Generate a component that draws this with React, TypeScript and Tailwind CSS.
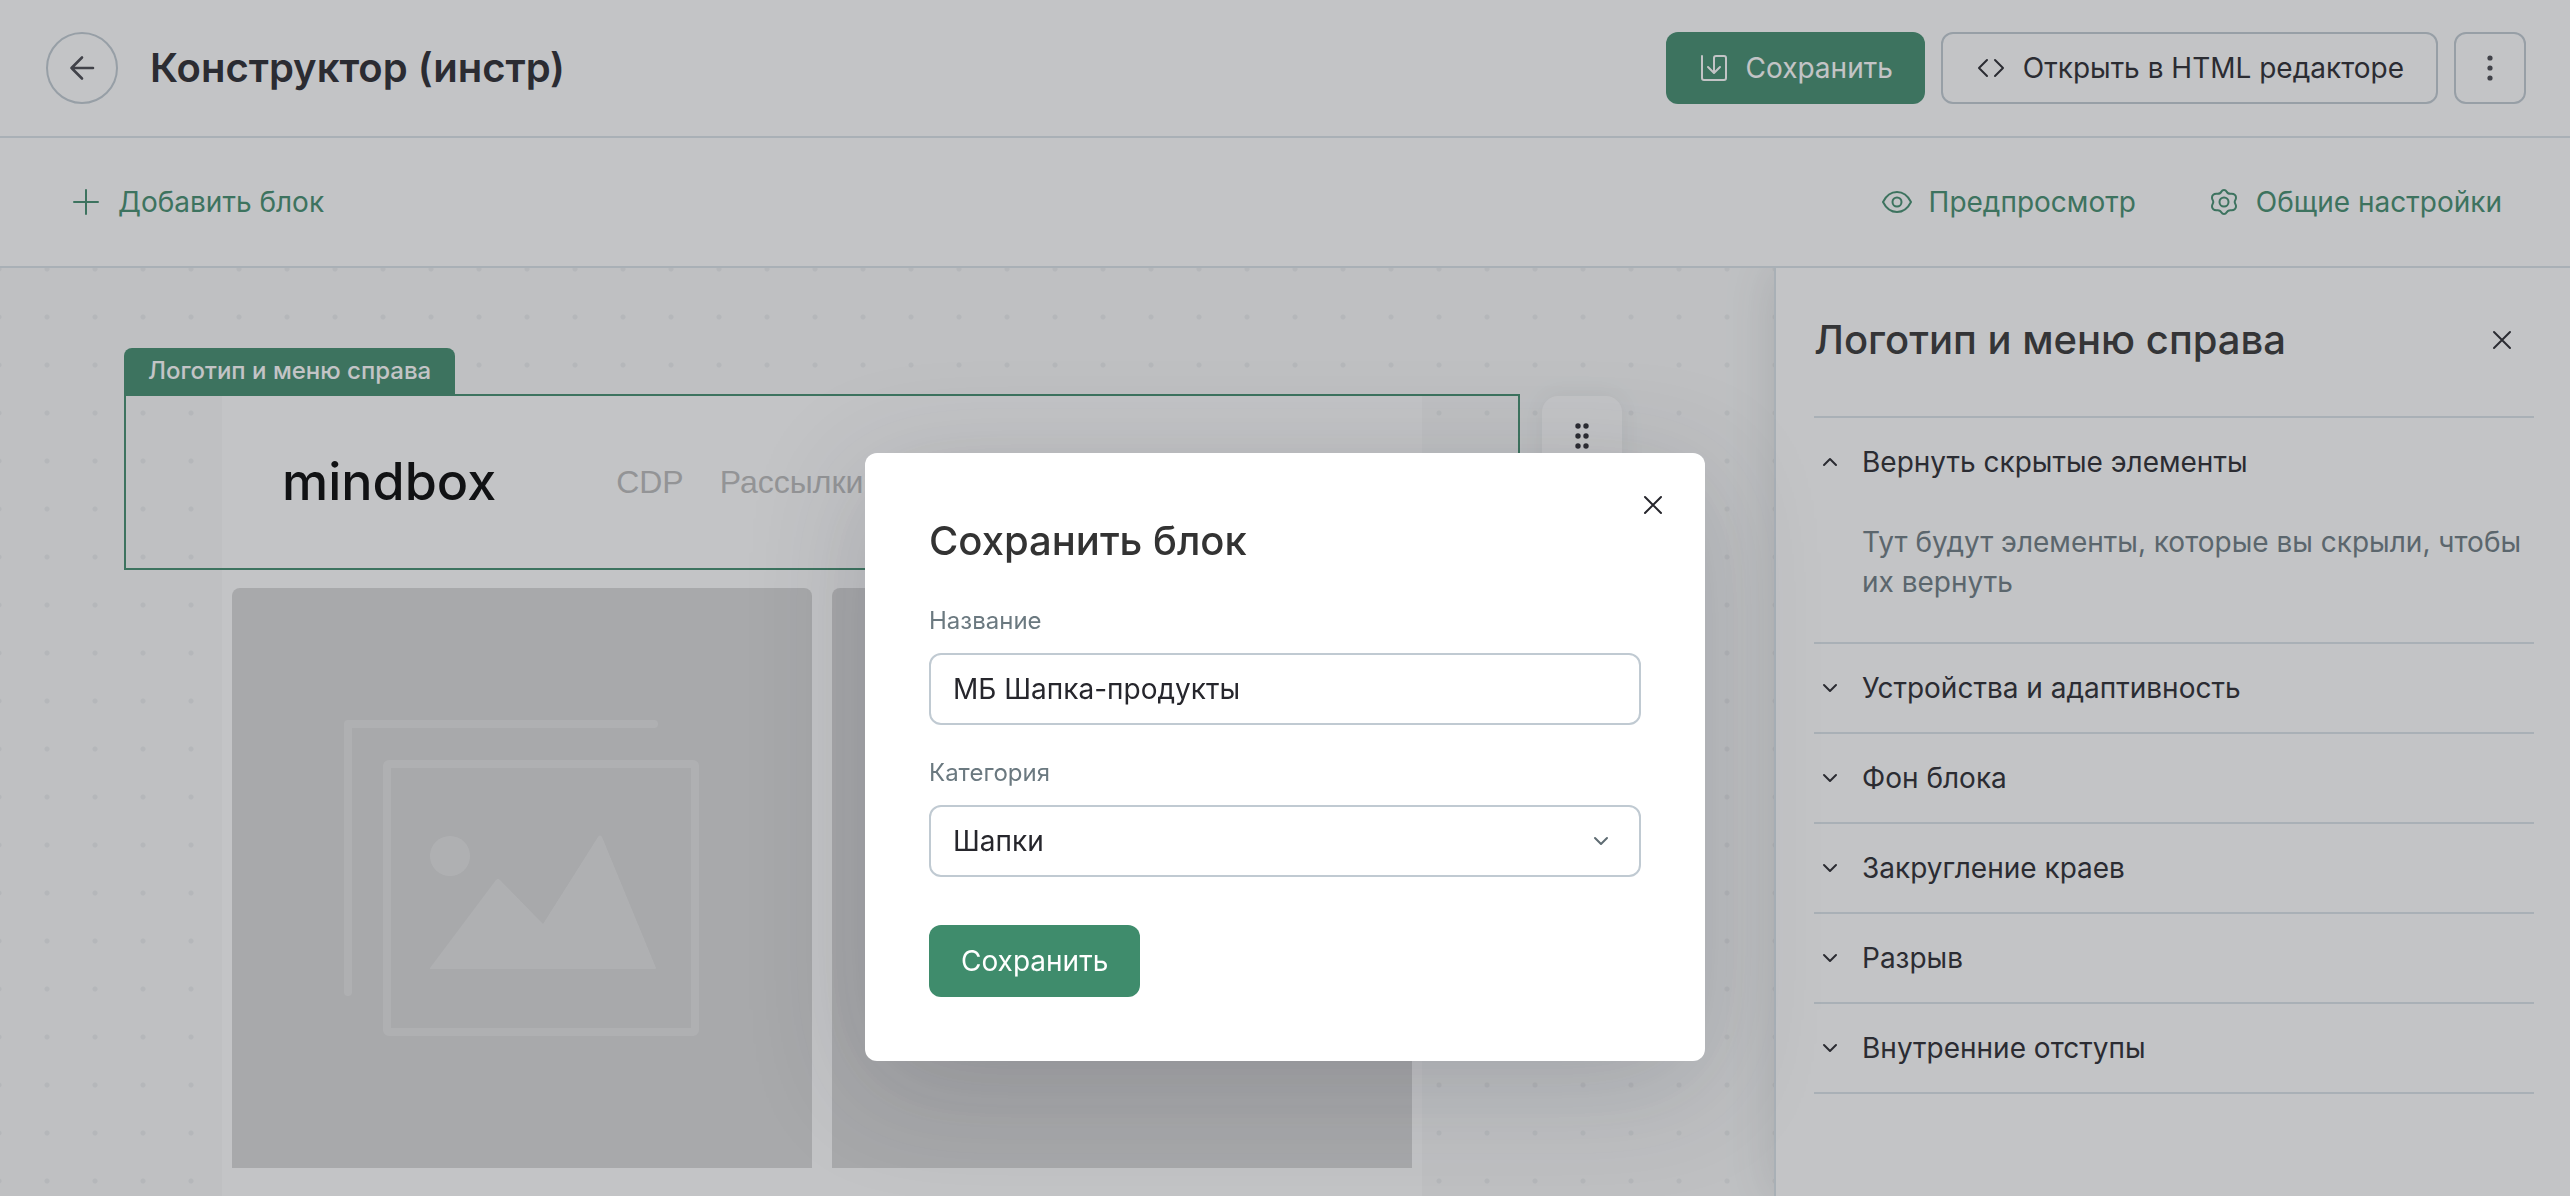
import { useState, type ReactNode } from "react";

const SECTIONS = [
  { id: "hidden", title: "Вернуть скрытые элементы", text: "Тут будут элементы, которые вы скрыли, чтобы их вернуть" },
  { id: "devices", title: "Устройства и адаптивность" },
  { id: "background", title: "Фон блока" },
  { id: "radius", title: "Закругление краев" },
  { id: "gap", title: "Разрыв" },
  { id: "padding", title: "Внутренние отступы" },
];

const CATEGORIES = ["Шапки"];

interface IconProps {
  size?: number;
  className?: string;
  children: ReactNode;
}

function Icon({ size = 32, className, children }: IconProps) {
  return (
    <svg
      width={size}
      height={size}
      viewBox={`0 0 ${size} ${size}`}
      fill="none"
      stroke="currentColor"
      strokeWidth={2}
      strokeLinecap="round"
      strokeLinejoin="round"
      className={className}
      aria-hidden="true"
    >
      {children}
    </svg>
  );
}

const ArrowLeftIcon = () => (
  <Icon className="text-[#45464d]">
    <path d="M27 16H5.500M16 5.500 5.500 16 16 26.500" strokeWidth={2.6} />
  </Icon>
);

const PlusIcon = () => (
  <Icon>
    <path d="M16 4v24M4 16h24" />
  </Icon>
);

const SaveIcon = () => (
  <Icon>
    <path d="M4 4v22a2 2 0 0 0 2 2h20a2 2 0 0 0 2-2V6a2 2 0 0 0-2-2h-8a2 2 0 0 0-2 2v14M10 15l6 6 6-6" />
  </Icon>
);

const CodeIcon = () => (
  <Icon>
    <path d="m12 8-8 8 8 8M20 8l8 8-8 8" />
  </Icon>
);

const EyeIcon = () => (
  <Icon>
    <path d="M2 16C5 10 10 6 16 6s11 4 14 10c-3 6-8 10-14 10S5 22 2 16Z" />
    <circle cx="16" cy="16" r="4.5" />
  </Icon>
);

const GearIcon = () => (
  <Icon>
    <path d="M13.5 5.5C14.5 3.5 17.5 3.5 18.5 5.5C19.5 7.5 21 8 23 7.8C26 7.4 28.3 9.5 28 12C27.8 13.8 26.7 14.5 26.7 16C26.7 17.5 27.8 18.2 28 20C28.3 22.5 26 24.6 23 24.2C21 24 19.5 24.5 18.5 26.5C17.5 28.5 14.5 28.5 13.5 26.5C12.5 24.5 11 24 9 24.2C6 24.6 3.7 22.5 4 20C4.2 18.2 5.3 17.5 5.3 16C5.3 14.5 4.2 13.8 4 12C3.7 9.5 6 7.4 9 7.8C11 8 12.5 7.5 13.5 5.5Z" />
    <circle cx="16" cy="16" r="4.5" />
  </Icon>
);

const MoreIcon = () => (
  <Icon className="text-[#45464d]">
    <g fill="currentColor" stroke="none">
      <circle cx="16" cy="6" r="2.6" />
      <circle cx="16" cy="16" r="2.6" />
      <circle cx="16" cy="26" r="2.6" />
    </g>
  </Icon>
);

const CloseIcon = () => (
  <Icon>
    <path d="m8 8 16 16M24 8 8 24" />
  </Icon>
);

const ChevronIcon = ({ up = false }: { up?: boolean }) => (
  <Icon>
    <path d={up ? "m10 19 6-6 6 6" : "m10 13 6 6 6-6"} />
  </Icon>
);

const DragIcon = () => (
  <Icon>
    <g fill="currentColor" stroke="none">
      {[6, 16, 26].map(y => (
        <g key={y}>
          <circle cx="12" cy={y} r="2.7" />
          <circle cx="20" cy={y} r="2.7" />
        </g>
      ))}
    </g>
  </Icon>
);

function ImagePlaceholder() {
  return (
    <div className="flex-1 aspect-square rounded-t-lg bg-[#d8d8d8]">
      <svg viewBox="0 0 580 580" className="w-full h-full" aria-hidden="true">
        <g fill="none" stroke="#e3e3e3" strokeWidth="8" strokeLinecap="round" strokeLinejoin="round">
          <path d="M116 404V136h306" />
          <rect x="155" y="176" width="308" height="268" rx="2" />
        </g>
        <g fill="#e3e3e3">
          <circle cx="218" cy="268" r="20" />
          <path d="M198 380 264 292q2-2 4 0l43 44 55-87q2-3 4 0l54 131q0 1-1 1H199q-2 0-1-1Z" />
        </g>
      </svg>
    </div>
  );
}

function Header() {
  return (
    <header className="relative z-[1] flex items-center justify-between pl-[46px] pr-11 py-8 border-b-2 border-[#dae3e9] bg-white">
      <div className="flex items-center gap-8">
        <button
          aria-label="Назад"
          className="w-[72px] h-[72px] rounded-full border-2 border-[#c0cad2] flex items-center justify-center"
        >
          <ArrowLeftIcon />
        </button>
        <h1 className="text-[40px] leading-[48px] font-semibold">Конструктор (инстр)</h1>
      </div>
      <div className="flex items-center gap-4">
        <button className="h-[72px] px-8 rounded-xl bg-[#3f8c6c] text-white flex items-center gap-4">
          <SaveIcon />
          Сохранить
        </button>
        <button className="h-[72px] px-8 rounded-xl border-2 border-[#c0cad2] flex items-center gap-4">
          <CodeIcon />
          Открыть в HTML редакторе
        </button>
        <button
          aria-label="Ещё"
          className="w-[72px] h-[72px] rounded-xl border-2 border-[#c0cad2] flex items-center justify-center"
        >
          <MoreIcon />
        </button>
      </div>
    </header>
  );
}

function Toolbar() {
  return (
    <div className="relative z-[1] flex items-center justify-between pl-[70px] pr-[68px] h-[130px] border-b-2 border-[#dae3e9] bg-white text-[#3f8c6c]">
      <button className="flex items-center gap-4">
        <PlusIcon />
        Добавить блок
      </button>
      <div className="flex items-center gap-[72px]">
        <button className="flex items-center gap-4">
          <EyeIcon />
          Предпросмотр
        </button>
        <button className="flex items-center gap-4">
          <GearIcon />
          Общие настройки
        </button>
      </div>
    </div>
  );
}

function Canvas() {
  return (
    <main className="flex-1 min-w-0 pt-20 pl-[124px] pr-[152px] flex items-stretch gap-[22px] bg-[#f9fafa] bg-[radial-gradient(circle_at_center,#ebedee_2px,transparent_3px)] bg-[size:48px_48px] bg-[position:23px_25px]">
      <div className="flex-1 min-w-0 flex flex-col">
        <div className="self-start h-[46px] px-6 rounded-t-lg bg-[#3f8c6c] text-white text-2xl leading-[46px] font-medium">
          Логотип и меню справа
        </div>
        <section className="border-2 border-[#3f8c6c] px-24">
          <div className="h-[172px] px-[60px] bg-white flex items-center gap-[120px]">
            <span className="text-[52px] leading-[64px] font-medium text-black">mindbox</span>
            <nav className="flex gap-9 font-['Liberation_Sans',sans-serif] text-[32px] leading-10 text-[#bbbbbb]">
              <a href="#cdp">CDP</a>
              <a href="#mail">Рассылки</a>
            </nav>
          </div>
        </section>
        <section className="flex-1 mx-[98px] px-[10px] pt-[18px] pb-7 bg-white flex items-start gap-5">
          <ImagePlaceholder />
          <ImagePlaceholder />
        </section>
      </div>
      <div className="w-20 mt-12 h-[240px] pt-6 rounded-2xl bg-white shadow-[0_0_24px_rgba(55,58,65,0.08)] flex flex-col items-center">
        <button aria-label="Переместить">
          <DragIcon />
        </button>
      </div>
    </main>
  );
}

function SettingsPanel() {
  const [open, setOpen] = useState("hidden");

  return (
    <aside className="relative w-[796px] shrink-0 pl-[38px] pr-9 border-l-2 border-[#dae3e9] bg-white shadow-[0_0_48px_rgba(55,58,65,0.16)]">
      <div className="flex items-center justify-between pt-12 pb-[52px] pr-4">
        <h2 className="text-[40px] leading-[48px] font-medium text-[#333333]">Логотип и меню справа</h2>
        <button aria-label="Закрыть панель">
          <CloseIcon />
        </button>
      </div>
      <div className="border-t-2 border-[#dae3e9]">
        {SECTIONS.map(section => (
          <div key={section.id} className="border-b-2 border-[#dae3e9]">
            <button
              onClick={() => setOpen(open === section.id ? "" : section.id)}
              aria-expanded={open === section.id}
              className="w-full h-[88px] flex items-center gap-4 text-left"
            >
              <ChevronIcon up={open === section.id} />
              {section.title}
            </button>
            {open === section.id && section.text && (
              <p className="pt-4 pb-10 pl-12 text-[#6b7980]">{section.text}</p>
            )}
          </div>
        ))}
      </div>
    </aside>
  );
}

function SaveBlockDialog({ onClose }: { onClose: () => void }) {
  const [name, setName] = useState("МБ Шапка-продукты");
  const [category, setCategory] = useState(CATEGORIES[0]);

  return (
    <div className="fixed inset-0 z-10 bg-[#373a41]/30 flex items-start justify-center pt-[453px]">
      <div
        role="dialog"
        aria-labelledby="dialog-title"
        className="relative w-[840px] p-16 rounded-xl bg-white shadow-[0_24px_120px_rgba(40,42,56,0.2)]"
      >
        <button aria-label="Закрыть" onClick={onClose} className="absolute top-9 right-9">
          <CloseIcon />
        </button>
        <h2 id="dialog-title" className="text-[40px] leading-[48px] font-medium text-[#333333]">
          Сохранить блок
        </h2>
        <form className="mt-10 flex flex-col items-start" onSubmit={e => e.preventDefault()}>
          <label htmlFor="block-name" className="text-2xl text-[#6b7980]">
            Название
          </label>
          <input
            id="block-name"
            value={name}
            onChange={e => setName(e.target.value)}
            className="mt-4 w-full h-[72px] px-[22px] rounded-xl border-2 border-[#c0cad2] bg-white outline-none"
          />
          <label htmlFor="block-category" className="mt-8 text-2xl text-[#6b7980]">
            Категория
          </label>
          <div className="relative mt-4 w-full">
            <select
              id="block-category"
              value={category}
              onChange={e => setCategory(e.target.value)}
              className="w-full h-[72px] px-[22px] rounded-xl border-2 border-[#c0cad2] bg-white appearance-none outline-none"
            >
              {CATEGORIES.map(item => (
                <option key={item}>{item}</option>
              ))}
            </select>
            <span className="absolute top-5 right-6 pointer-events-none text-[#5f6c73]">
              <ChevronIcon />
            </span>
          </div>
          <button className="mt-12 h-[72px] px-8 rounded-xl bg-[#3f8c6c] text-white">Сохранить</button>
        </form>
      </div>
    </div>
  );
}

export default function App() {
  const [dialogOpen, setDialogOpen] = useState(true);

  return (
    <div className="min-h-screen flex flex-col bg-white font-['Inter',sans-serif] text-[28px] leading-10 text-[#26262c]">
      <Header />
      <Toolbar />
      <div className="flex-1 flex">
        <Canvas />
        <SettingsPanel />
      </div>
      {dialogOpen && <SaveBlockDialog onClose={() => setDialogOpen(false)} />}
    </div>
  );
}
